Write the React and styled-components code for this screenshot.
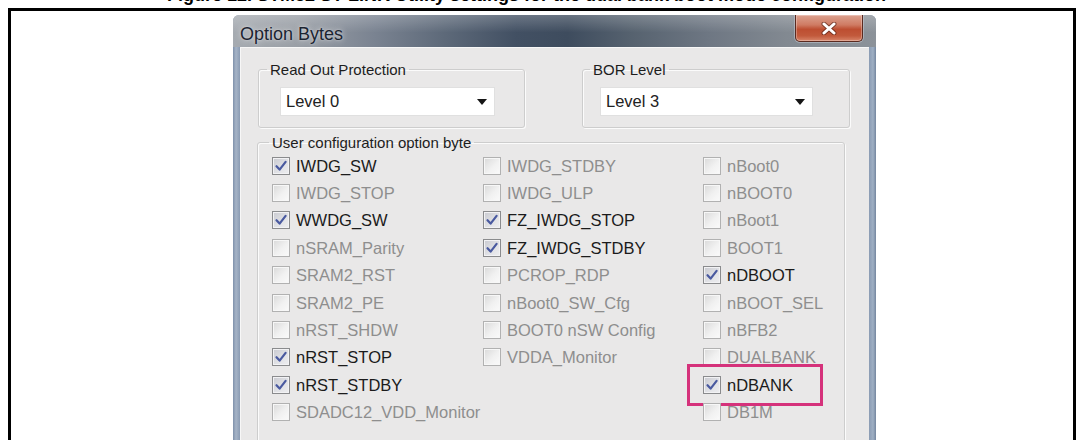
import React from 'react';
import styled, { createGlobalStyle } from 'styled-components';

const GlobalStyle = createGlobalStyle`
  html, body {
    margin: 0;
    padding: 0;
    background: #fff;
  }
  body {
    font-family: "Liberation Sans", Arial, sans-serif;
    overflow: hidden;
  }
`;

const CaptionClip = styled.div`
  height: 8px;
  overflow: hidden;
`;

const CaptionText = styled.div`
  margin-top: -15px;
  padding-left: 167px;
  font: bold 18px/20px "Liberation Sans", Arial, sans-serif;
  color: #000;
  white-space: nowrap;
`;

const Frame = styled.div`
  box-sizing: border-box;
  height: 432px;
  margin: 0 6px 0 8px;
  border: 3px solid #000;
  border-bottom: 0;
  overflow: hidden;
`;

const Window = styled.div`
  width: 643px;
  height: 440px;
  margin: 4px 0 0 222px;
  display: flex;
  flex-direction: column;
  border-radius: 6px 6px 0 0;
  overflow: hidden;
  background: linear-gradient(
    90deg,
    #7f91ab 0,
    #a6b4c7 3px,
    #8a9bb3 7px,
    #8a9bb3 636px,
    #9fafc3 640px,
    #74869f 643px
  );
`;

const TitleBar = styled.div`
  height: 32px;
  flex: none;
  display: flex;
  justify-content: space-between;
  align-items: flex-start;
  padding-left: 7px;
  background:
    linear-gradient(180deg, rgba(255, 255, 255, 0.22), rgba(255, 255, 255, 0) 55%),
    linear-gradient(
      90deg,
      #a6abb1 0%,
      #9a9fa6 10%,
      #7a8391 22%,
      #5d6979 33%,
      #425063 44%,
      #3e4c5e 52%,
      #56626f 62%,
      #6e7783 74%,
      #828991 86%,
      #8c9299 100%
    );
`;

const Title = styled.div`
  padding-top: 9px;
  font-size: 18px;
  line-height: 20px;
  color: #1b2431;
  text-shadow: 0 0 6px rgba(255, 255, 255, 0.7), 0 0 2px rgba(255, 255, 255, 0.5);
`;

const CloseButton = styled.div`
  box-sizing: border-box;
  width: 68px;
  height: 27px;
  margin-right: 13px;
  display: flex;
  align-items: center;
  justify-content: center;
  border: 1px solid #5a2a20;
  border-top: 0;
  border-radius: 0 0 5px 5px;
  background: linear-gradient(
    180deg,
    #dca290 0%,
    #cf7b63 38%,
    #bd4e31 55%,
    #c25a3c 80%,
    #d8866a 100%
  );
  box-shadow: inset 0 0 0 1px rgba(255, 255, 255, 0.3), 0 0 0 1px rgba(200, 205, 215, 0.5);
`;

const Client = styled.div`
  flex: 1;
  margin: 0 7px;
  background: #e9e8e8;
  box-shadow: inset 1px 1px 0 #f7f7f7;
`;

const TopRow = styled.div`
  display: flex;
  gap: 57px;
  padding: 14px 0 0 18px;
`;

const GroupBox = styled.fieldset`
  box-sizing: border-box;
  width: ${p => p.$width ? `${p.$width}px` : 'auto'};
  margin: 0;
  padding: ${p => p.$pad};
  border: 1px solid #cdcdcd;
  border-radius: 3px;
  box-shadow: inset 1px 1px 0 #fbfbfb, 1px 1px 0 #fbfbfb;
  min-width: 0;
`;

const Legend = styled.legend`
  margin-left: ${p => p.$shift}px;
  padding: 0 3px;
  font-size: 15px;
  line-height: 17px;
  color: #1d1d1d;
`;

const Select = styled.div`
  box-sizing: border-box;
  width: ${p => p.$width}px;
  height: 29px;
  display: flex;
  align-items: center;
  justify-content: space-between;
  padding: 0 7px 0 5px;
  background: #fff;
  border: 1px solid #e0e0e0;
  font-size: 16.5px;
  color: #222;
`;

const Arrow = styled.span`
  width: 0;
  height: 0;
  border-left: 5px solid transparent;
  border-right: 5px solid transparent;
  border-top: 6px solid #151515;
`;

const UserGroup = styled(GroupBox)`
  margin: 6px 24px 0 17px;
`;

const Columns = styled.div`
  display: flex;
`;

const Column = styled.div`
  display: flex;
  flex-direction: column;
  width: ${p => p.$width ? `${p.$width}px` : 'auto'};
  flex: ${p => p.$width ? 'none' : 1};
`;

const Row = styled.div`
  position: relative;
  height: 27.4px;
  display: flex;
  align-items: center;
  gap: 6px;

  ${p => p.$marked && `
    &::after {
      content: '';
      position: absolute;
      left: -16px;
      top: 50%;
      width: 136px;
      height: 42px;
      transform: translateY(-50%);
      box-sizing: border-box;
      border: 3px solid #d5327b;
    }
  `}
`;

const Box = styled.span`
  box-sizing: border-box;
  width: 18px;
  height: 18px;
  flex: none;
  display: flex;
  align-items: center;
  justify-content: center;
  border: 1px solid ${p => p.$checked ? '#8a8b8d' : '#b1b1b1'};
  background: ${p => p.$checked
    ? 'linear-gradient(135deg, #c9cad0 0%, #e2e3e7 60%, #eeeef0 100%)'
    : 'linear-gradient(135deg, #d9d9d9 0%, #f1f1f1 55%, #fafafa 100%)'};
  box-shadow: inset 0 0 0 1px ${p => p.$checked ? '#f2f2f4' : '#f7f7f7'};
`;

const Label = styled.span`
  font-size: 16.5px;
  line-height: 20px;
  white-space: nowrap;
  color: ${p => p.$checked ? '#1b1b1b' : '#8e8e8e'};
`;

const optionColumns = [
  {
    width: 211,
    items: [
      { name: 'IWDG_SW', on: true },
      { name: 'IWDG_STOP' },
      { name: 'WWDG_SW', on: true },
      { name: 'nSRAM_Parity' },
      { name: 'SRAM2_RST' },
      { name: 'SRAM2_PE' },
      { name: 'nRST_SHDW' },
      { name: 'nRST_STOP', on: true },
      { name: 'nRST_STDBY', on: true },
      { name: 'SDADC12_VDD_Monitor' },
    ],
  },
  {
    width: 220,
    items: [
      { name: 'IWDG_STDBY' },
      { name: 'IWDG_ULP' },
      { name: 'FZ_IWDG_STOP', on: true },
      { name: 'FZ_IWDG_STDBY', on: true },
      { name: 'PCROP_RDP' },
      { name: 'nBoot0_SW_Cfg' },
      { name: 'BOOT0 nSW Config' },
      { name: 'VDDA_Monitor' },
    ],
  },
  {
    items: [
      { name: 'nBoot0' },
      { name: 'nBOOT0' },
      { name: 'nBoot1' },
      { name: 'BOOT1' },
      { name: 'nDBOOT', on: true },
      { name: 'nBOOT_SEL' },
      { name: 'nBFB2' },
      { name: 'DUALBANK' },
      { name: 'nDBANK', on: true, marked: true },
      { name: 'DB1M' },
    ],
  },
];

const CheckMark = () => (
  <svg width="14" height="14" viewBox="0 0 14 14">
    <path
      d="M2.5 7.2 L5.6 10.6 L11.6 2.8"
      fill="none"
      stroke="#4a5aa0"
      strokeWidth="2.2"
      strokeLinecap="round"
      strokeLinejoin="round"
    />
  </svg>
);

const CloseGlyph = () => (
  <svg width="16" height="13" viewBox="0 0 16 13">
    <path d="M3 2 L13 11 M13 2 L3 11" stroke="rgba(70,25,15,0.55)" strokeWidth="5" strokeLinecap="round" />
    <path d="M3 2 L13 11 M13 2 L3 11" stroke="#fff" strokeWidth="3" strokeLinecap="round" />
  </svg>
);

const Option = ({ name, on, marked }) => (
  <Row $marked={marked}>
    <Box $checked={on}>{on && <CheckMark />}</Box>
    <Label $checked={on}>{name}</Label>
  </Row>
);

const App = () => (
  <>
    <GlobalStyle />
    <CaptionClip>
      <CaptionText>Figure 12. STM32 ST-LINK Utility settings for the dual bank boot mode configuration</CaptionText>
    </CaptionClip>
    <Frame>
      <Window>
        <TitleBar>
          <Title>Option Bytes</Title>
          <CloseButton>
            <CloseGlyph />
          </CloseButton>
        </TitleBar>
        <Client>
          <TopRow>
            <GroupBox $width={267} $pad="9px 0 11px 21px">
              <Legend $shift={-13}>Read Out Protection</Legend>
              <Select $width={215}>
                Level 0
                <Arrow />
              </Select>
            </GroupBox>
            <GroupBox $width={268} $pad="9px 0 11px 17px">
              <Legend $shift={-10}>BOR Level</Legend>
              <Select $width={213}>
                Level 3
                <Arrow />
              </Select>
            </GroupBox>
          </TopRow>
          <UserGroup $pad="1px 0 24px 14px">
            <Legend $shift={-3}>User configuration option byte</Legend>
            <Columns>
              {optionColumns.map((col, i) => (
                <Column key={i} $width={col.width}>
                  {col.items.map(item => (
                    <Option key={item.name} {...item} />
                  ))}
                </Column>
              ))}
            </Columns>
          </UserGroup>
        </Client>
      </Window>
    </Frame>
  </>
);

export default App;
